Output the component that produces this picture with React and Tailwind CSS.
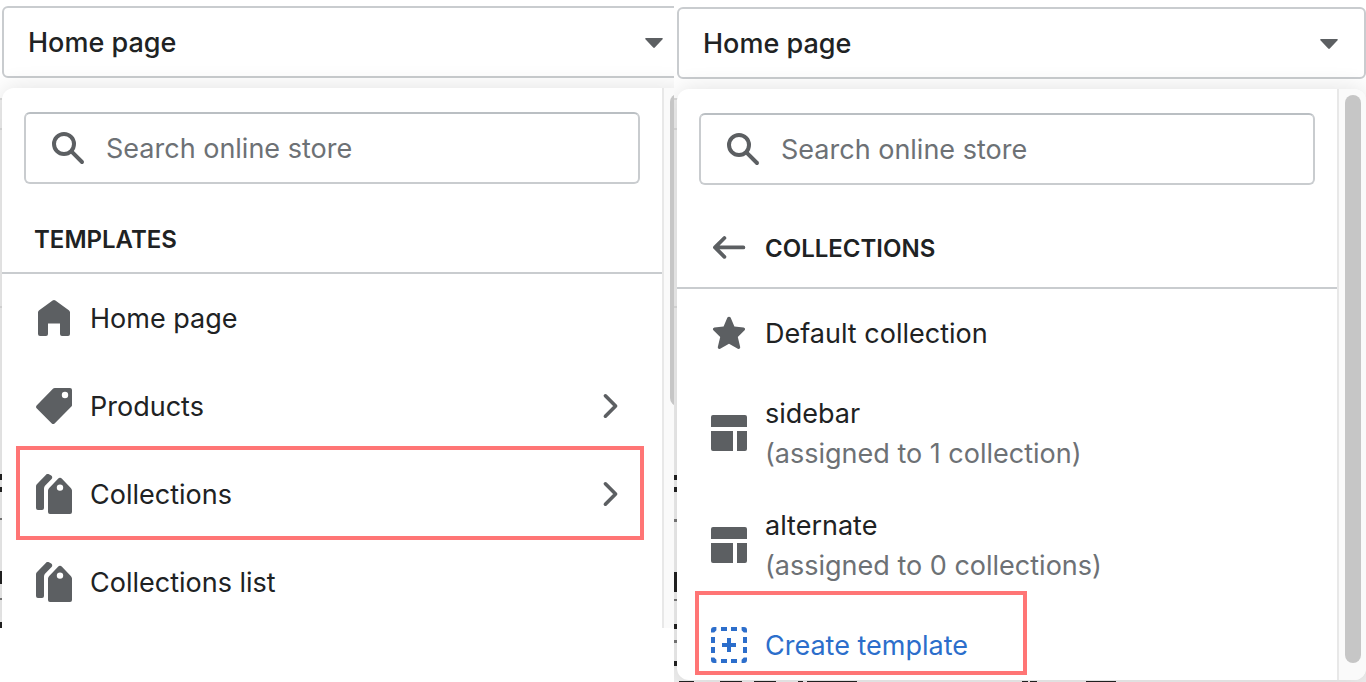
import { useState } from "react";

const Icon = ({ children, className = "text-[#5c5f62]" }) => (
  <svg viewBox="0 0 20 20" fill="currentColor" aria-hidden="true" className={`w-10 h-10 shrink-0 ${className}`}>
    {children}
  </svg>
);

const HomeIcon = () => (
  <Icon>
    <path d="M9.3 1.3a1.2 1.2 0 0 1 1.4 0l6.7 4.8c.4.3.6.7.6 1.2V18a1 1 0 0 1-1 1h-3a1 1 0 0 1-1-1v-5.3H7V18a1 1 0 0 1-1 1H3a1 1 0 0 1-1-1V7.3c0-.5.2-.9.6-1.2z" />
  </Icon>
);

const TagIcon = () => (
  <Icon>
    <path
      fillRule="evenodd"
      d="M9.6 1.3c.2-.2.5-.3.8-.3H18a1 1 0 0 1 1 1v7.6c0 .3-.1.5-.3.7l-8.4 8.4a1 1 0 0 1-1.4 0l-7.6-7.6a1 1 0 0 1 0-1.4zM15.5 6.1a1.6 1.6 0 1 0 0-3.2 1.6 1.6 0 0 0 0 3.2z"
    />
  </Icon>
);

const TagsIcon = () => (
  <Icon>
    <path d="M5.9.5a1.4 1.4 0 0 1 1.8-.3l.9.6c.6.4.7 1.2.2 1.7L5.5 5.9c-.3.4-.5.8-.5 1.3V17a1 1 0 0 1-1 1H2a1 1 0 0 1-1-1V6.2c0-.4.1-.8.4-1.1z" />
    <path
      fillRule="evenodd"
      d="M11.9 2.5a1.5 1.5 0 0 1 2.2 0l4.4 4.6c.3.4.5.8.5 1.2V19a1 1 0 0 1-1 1H8a1 1 0 0 1-1-1V8.3c0-.4.2-.8.5-1.2zM13 8.4a1.6 1.6 0 1 0 0-3.2 1.6 1.6 0 0 0 0 3.2z"
    />
  </Icon>
);

const StarIcon = () => (
  <Icon>
    <path d="M9.2 2.3c.3-.6 1.3-.6 1.6 0l1.9 4.4 4.6.5c.7.1 1 .9.5 1.4l-3.4 3.4 1.2 5c.1.7-.6 1.2-1.2.9L10 15.4l-4.4 2.5c-.6.3-1.3-.2-1.2-.9l1.2-5-3.4-3.4c-.5-.5-.2-1.3.5-1.4l4.6-.5z" />
  </Icon>
);

const LayoutIcon = () => (
  <Icon>
    <path d="M2 1h16a1 1 0 0 1 1 1v5H1V2a1 1 0 0 1 1-1zM1 9h11v10H2a1 1 0 0 1-1-1zM14 9h5v9a1 1 0 0 1-1 1h-4z" />
  </Icon>
);

const AddTemplateIcon = () => (
  <Icon className="text-[#2c6ecb]">
    <path d="M2.5 1h1.2v1.6L2.6 3.7H1V2.5A1.5 1.5 0 0 1 2.5 1zM6 1h3v2H6zM11 1h3v2h-3zM17.5 1h-1.2v1.6l1.1 1.1H19V2.5A1.5 1.5 0 0 0 17.5 1zM1 6h2v3H1zM1 11h2v3H1zM17 6h2v3h-2zM17 11h2v3h-2zM2.5 19h1.2v-1.6l-1.1-1.1H1v1.2A1.5 1.5 0 0 0 2.5 19zM6 17h3v2H6zM11 17h3v2h-3zM17.5 19h-1.2v-1.6l1.1-1.1H19v1.2a1.5 1.5 0 0 1-1.5 1.5z" />
    <path d="M9 6.5h2V9h2.5v2H11v2.5H9V11H6.5V9H9z" />
  </Icon>
);

const ChevronIcon = () => (
  <Icon>
    <path d="M7.7 4.9l5.1 5.1-5.1 5.1" fill="none" stroke="currentColor" strokeWidth="1.8" strokeLinecap="round" strokeLinejoin="round" />
  </Icon>
);

const ArrowLeftIcon = () => (
  <Icon>
    <path d="M17.2 9.2H3.2M7.7 4.5L3 9.2l4.7 4.7" fill="none" stroke="currentColor" strokeWidth="1.9" strokeLinecap="round" strokeLinejoin="round" />
  </Icon>
);

const SearchIcon = () => (
  <Icon>
    <circle cx="8" cy="8" r="5" fill="none" stroke="currentColor" strokeWidth="2" />
    <path d="M11.7 11.7l5.3 5.3" stroke="currentColor" strokeWidth="2" strokeLinecap="round" />
  </Icon>
);

function PagePicker() {
  return (
    <div className="relative">
      <select aria-label="Page" className="block w-full h-[72px] appearance-none rounded-md border-2 border-[#c9cccf] bg-white px-6 pt-0.5 leading-10 font-medium text-[#202223]">
        <option>Home page</option>
      </select>
      <svg viewBox="0 0 18 10" aria-hidden="true" className="absolute right-7 top-8 w-[18px] h-[10px] text-[#5c5f62] pointer-events-none">
        <path d="M1 0h16c.8 0 1.1.7.6 1.2L9.8 9.5c-.4.5-1.1.5-1.6 0L.4 1.2C-.1.7.2 0 1 0z" fill="currentColor" />
      </svg>
    </div>
  );
}

function SearchField({ id }) {
  const [query, setQuery] = useState("");
  return (
    <div className="px-[22px] pt-6">
      <label htmlFor={id} className="flex items-center gap-[18px] h-[72px] px-[22px] rounded-md border-2 border-[#c9cccf] border-t-[#babfc3]">
        <SearchIcon />
        <input
          id={id}
          type="text"
          aria-label="Search online store"
          placeholder="Search online store"
          value={query}
          onChange={(e) => setQuery(e.target.value)}
          className="flex-1 min-w-0 pt-0.5 bg-transparent outline-none placeholder:text-[#6d7175]"
        />
      </label>
    </div>
  );
}

function Popover({ thumb, children }) {
  return (
    <div className="relative flex flex-1 min-h-0 mt-[10px] overflow-hidden rounded-xl bg-white shadow-[0_0_24px_rgba(0,0,0,0.12)]">
      <div className="flex-1 min-w-0">{children}</div>
      <div className="w-[29px] shrink-0 border-l-2 border-[#e8e8e8] bg-[#fafafa] pt-[6px] pl-[6px]">
        <div className={`w-4 rounded-full bg-[#c6c6c6] ${thumb}`} />
      </div>
    </div>
  );
}

function Row({ icon, label, more }) {
  return (
    <button className="flex items-center gap-4 w-full h-[88px] px-8 text-left">
      {icon}
      <span className="flex-1 pt-0.5">{label}</span>
      {more && <ChevronIcon />}
    </button>
  );
}

function TemplateRow({ name, note }) {
  return (
    <button className="flex items-center gap-4 w-full h-28 px-8 text-left leading-10">
      <LayoutIcon />
      <span className="pt-0.5">
        <span className="block">{name}</span>
        <span className="block text-[#6d7175]">{note}</span>
      </span>
    </button>
  );
}

// slivers of the store preview that show around the popover
const leftBits = [
  [474, 6], [487, 5], [518, 2], [571, 13], [598, 2], [622, 6],
];
const rightBits = [
  [475, 5], [487, 5], [519, 3], [572, 20], [599, 2], [624, 5], [640, 3], [661, 5],
];
const bottomBits = [
  [5, 15], [46, 22], [80, 22], [124, 5], [133, 50], [348, 6], [356, 7], [412, 30],
];

function Preview({ bits, bottom = [] }) {
  return (
    <svg aria-hidden="true" className="absolute inset-0 w-full h-full">
      <rect x="0" y="98" width="100%" height="100%" fill="#efefef" />
      <path d="M0 99h8M0 129h8M0 307h8" stroke="#dcdcdc" strokeWidth="2" />
      {bits.map(([y, h]) => (
        <rect key={y} x="0" y={y} width="4" height={h} fill={h < 4 ? "#777" : "#222"} />
      ))}
      {bottom.map(([x, w]) => (
        <rect key={x} x={x} y="681" width={w} height="2" fill="#222" />
      ))}
    </svg>
  );
}

export default function App() {
  return (
    <main className="grid grid-cols-[674fr_692fr] items-start min-h-screen overflow-hidden bg-white font-['Inter',sans-serif] text-[27px] leading-8 text-[#202223]">
      {/* Templates */}
      <section className="relative min-w-0 h-[628px] overflow-hidden">
        <Preview bits={leftBits} />
        <div className="relative flex flex-col h-[648px] pt-[6px] ml-[2px] -mr-[17px]">
          <PagePicker />
          <Popover thumb="h-[312px]">
            <SearchField id="search-left" />
            <h2 className="pt-10 pb-4 px-8 border-b-2 border-[#c9cccf] text-2xl leading-8 font-semibold">TEMPLATES</h2>
            <Row icon={<HomeIcon />} label="Home page" />
            <Row icon={<TagIcon />} label="Products" more />
            <div className="relative">
              <Row icon={<TagsIcon />} label="Collections" more />
              <div className="absolute -top-1 -bottom-[2px] left-[14px] right-[18px] border-4 border-[#ff7575] pointer-events-none" />
            </div>
            <Row icon={<TagsIcon />} label="Collections list" />
          </Popover>
        </div>
      </section>

      {/* Collections */}
      <section className="relative min-w-0 h-[682px] overflow-hidden">
        <Preview bits={rightBits} bottom={bottomBits} />
        <div className="relative flex flex-col h-[680px] pt-[7px] ml-[3px]">
          <PagePicker />
          <Popover thumb="h-[568px]">
            <SearchField id="search-right" />
            <div className="flex items-center gap-4 pt-11 pb-[18px] px-8 border-b-2 border-[#c9cccf]">
              <button aria-label="Back to templates">
                <ArrowLeftIcon />
              </button>
              <h2 className="text-2xl leading-8 font-semibold">COLLECTIONS</h2>
            </div>
            <Row icon={<StarIcon />} label="Default collection" />
            <TemplateRow name="sidebar" note="(assigned to 1 collection)" />
            <TemplateRow name="alternate" note="(assigned to 0 collections)" />
            <div className="relative">
              <Row icon={<AddTemplateIcon />} label={<span className="text-[#2c6ecb]">Create template</span>} />
              <div className="absolute -top-[10px] left-[18px] w-[332px] h-[84px] border-4 border-[#ff7575] pointer-events-none" />
            </div>
          </Popover>
        </div>
      </section>
    </main>
  );
}
